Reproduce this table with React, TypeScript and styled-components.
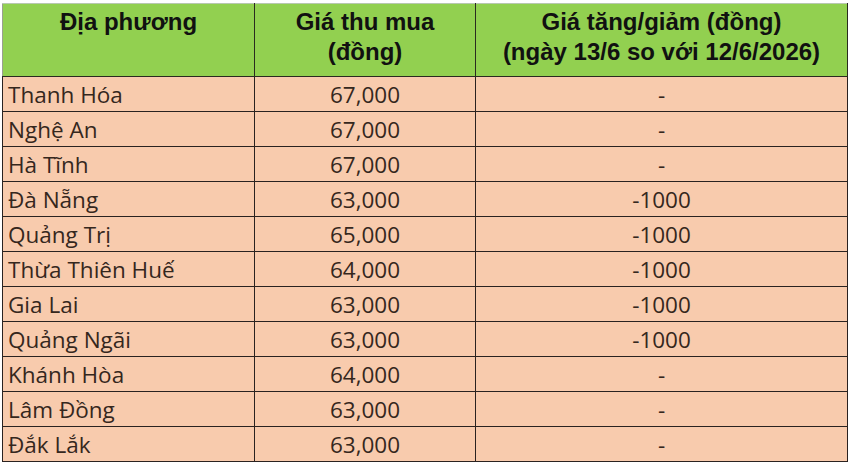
import styled, { createGlobalStyle } from "styled-components"

const GlobalStyle = createGlobalStyle`
html, body {
  margin: 0;
  padding: 0;
  background: #ffffff;
}
`

const Wrapper = styled.div`
padding: 3px 0 0 2px;
width: 850px;
height: 467px;
box-sizing: border-box;
`

const PriceTable = styled.table`
border-collapse: collapse;
table-layout: fixed;
width: 845px;
`

const HeadCell = styled.th`
background: #92d050;
border: 1px solid #2a2a20;
border-top-color: #b8c8b0;
border-left-color: #9aa090;
height: 73px;
box-sizing: border-box;
padding: 3px 2px 0;
vertical-align: top;
font-family: "Liberation Sans", Arial, sans-serif;
font-weight: bold;
font-size: 24px;
line-height: 30px;
color: #111;
text-align: center;
white-space: nowrap;
`

const Cell = styled.td<{ $align?: string }>`
background: #f8cbad;
border: 1px solid #2a2220;
height: 35px;
box-sizing: border-box;
padding: 0 5px;
font-family: "Open Sans", "Noto Sans", sans-serif;
font-size: 22.5px;
color: #35271d;
text-align: ${(p) => p.$align || "left"};
vertical-align: middle;
white-space: nowrap;
`

const rows = [
    ["Thanh Hóa", "67,000", "-"],
    ["Nghệ An", "67,000", "-"],
    ["Hà Tĩnh", "67,000", "-"],
    ["Đà Nẵng", "63,000", "-1000"],
    ["Quảng Trị", "65,000", "-1000"],
    ["Thừa Thiên Huế", "64,000", "-1000"],
    ["Gia Lai", "63,000", "-1000"],
    ["Quảng Ngãi", "63,000", "-1000"],
    ["Khánh Hòa", "64,000", "-"],
    ["Lâm Đồng", "63,000", "-"],
    ["Đắk Lắk", "63,000", "-"],
]

export default function App() {
    return (
        <Wrapper>
            <GlobalStyle />
            <PriceTable>
                <colgroup>
                    <col style={{ width: 252 }} />
                    <col style={{ width: 221 }} />
                    <col style={{ width: 372 }} />
                </colgroup>
                <thead>
                    <tr>
                        <HeadCell>Địa phương</HeadCell>
                        <HeadCell>Giá thu mua<br />(đồng)</HeadCell>
                        <HeadCell>Giá tăng/giảm (đồng)<br />(ngày 13/6 so với 12/6/2026)</HeadCell>
                    </tr>
                </thead>
                <tbody>
                    {rows.map((r) => (
                        <tr key={r[0]}>
                            <Cell>{r[0]}</Cell>
                            <Cell $align="center">{r[1]}</Cell>
                            <Cell $align="center">{r[2]}</Cell>
                        </tr>
                    ))}
                </tbody>
            </PriceTable>
        </Wrapper>
    )
}
